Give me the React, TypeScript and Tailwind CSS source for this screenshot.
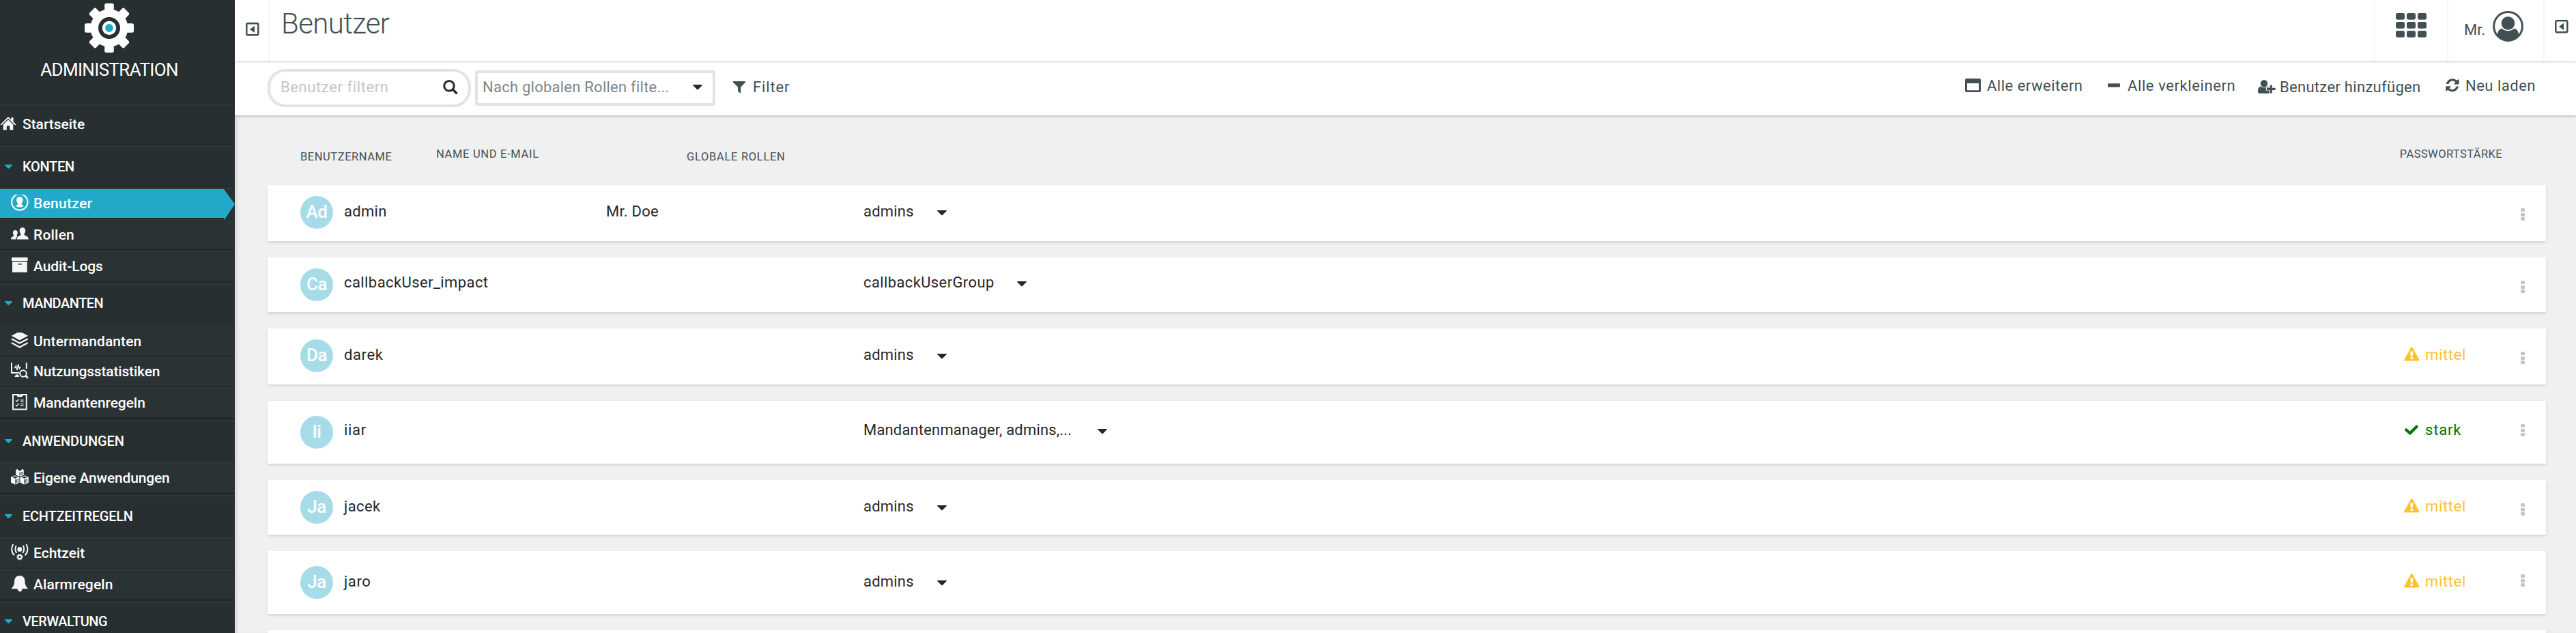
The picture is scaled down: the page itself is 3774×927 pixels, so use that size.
import type { ReactNode } from "react";

/* ---------- Icons ---------- */

function GearLogo() {
  return (
    <svg width="72" height="72" viewBox="-36 -36 72 72">
      <g fill="#fff">
        <circle r="27.5" />
        {[0, 45, 90, 135].map((a) => (
          <rect key={a} x="-6.8" y="-36" width="13.6" height="72" rx="2.5" transform={`rotate(${a})`} />
        ))}
      </g>
      <circle r="16" fill="#272f31" />
      <circle r="10.2" fill="#fff" />
      <circle r="5.9" fill="#22a9c9" />
    </svg>
  );
}

function HomeIcon() {
  return (
    <svg width="24" height="20" viewBox="0 0 24 20" fill="#f5f6f6">
      <path d="M12 0 16.3 4.2V1h3.2v6.3L23.5 11.3 22.2 12.5 12 2.6 1.8 12.5.5 11.3z" />
      <path d="M12 4.2 19.3 11.2V19.2H14.3V13.2H9.8V19.2H4.7V11.2z" />
    </svg>
  );
}

function UserCircleSmall() {
  return (
    <svg width="26" height="24" viewBox="0 0 26 24" overflow="hidden">
      <circle cx="12.8" cy="11" r="11.7" fill="none" stroke="#fff" strokeWidth="2.1" />
      <path fill="#fff" d="M12.800 3.200c3 0 4.700 1.900 4.700 4.700 0 2-.9 3.700-1.900 4.700v2l3.100 1.400c-1.300 1.700-3.400 2.600-5.900 2.600s-4.600-.9-5.900-2.600l3.100-1.400v-2C9 11.600 8.100 9.900 8.100 7.900c0-2.800 1.700-4.700 4.700-4.700z" />
    </svg>
  );
}

function UsersIcon() {
  return (
    <svg width="26" height="24" viewBox="0 -2 26 24" fill="#f5f6f6">
      <path d="M16.900 .2c2.800 0 4.300 2 4.300 4.600 0 2-.7 3.400-1.600 4.400v2.200c2.600 1 6 1.800 6.400 6.100H8.600c.3-4.200 3.400-5.100 5.700-6.100V9.200c-.9-1-1.600-2.400-1.600-4.400 0-2.600 1.400-4.600 4.200-4.600z" />
      <path d="M6.300 4c2.200 0 3.500 1.600 3.500 3.700 0 1.500-.5 2.600-1.200 3.400v1.600l1 .5C8.200 14.200 7.300 15.500 7.100 17.500H0c.3-3.300 2.300-4 4.100-4.800v-1.600C3.400 10.300 2.900 9.200 2.900 7.700 2.900 5.600 4.100 4 6.300 4z" />
    </svg>
  );
}

function ArchiveIcon() {
  return (
    <svg width="26" height="24" viewBox="0 0 26 24" fill="#f5f6f6">
      <rect x="1" y="0" width="23.600" height="5" rx=".6" />
      <path fillRule="evenodd" d="M2 6.200H23.800V21.200a.6.600 0 0 1-.6.600H2.600a.6.600 0 0 1-.6-.6zM10 9v1.600h5.800V9z" />
    </svg>
  );
}

function LayersIcon() {
  return (
    <svg width="26" height="24" viewBox="0 0 26 24">
      <path fill="#f5f6f6" d="M9.500 0H16l9.200 4.800L12.800 11.300.6 4.800z" />
      <path fill="none" stroke="#f5f6f6" strokeWidth="2.200" d="M1 9.200 12.800 15.500 24.700 9.200M1 15 12.800 21.400 24.700 15" />
    </svg>
  );
}

function StatsIcon() {
  return (
    <svg width="26" height="24" viewBox="0 0 26 24" fill="none" stroke="#f5f6f6">
      <path strokeWidth="2" d="M1 0V15H12M22.800 0V9" />
      <path strokeWidth="1.300" d="M4.500 7.600H6.200L7.500 4.500 9 11 10.800 2.500 12.300 9 13 7H14.500" />
      <circle cx="18" cy="16" r="4.800" strokeWidth="2" />
      <path strokeWidth="2.600" d="M21.500 19.300 25 22.700" />
      <path fill="#f5f6f6" stroke="none" d="M7.500 17.500h3.200l1.800 3.500H5.500v-.8z" />
    </svg>
  );
}

function ChecklistIcon() {
  return (
    <svg width="26" height="24" viewBox="0 0 26 24" fill="none" stroke="#f5f6f6">
      <path strokeWidth="2" d="M10.500 1H3V22.500H22.800V1H15.500" />
      <path fill="#f5f6f6" stroke="none" d="M8.500 0h3.200a1.500 1.500 0 0 0 2.600 0h3.200v2.500l-1.500 1.700h-6L8.500 2.500z" />
      <path strokeWidth="1.300" d="M7 9.500l1.500 1.500 3-3.500M7 16l1.500 1.500 3-3.500" />
      <path strokeWidth="1.200" d="M14 8.800h4.500M14 11.200h4.500M14 14.700h4.500M14 17.200h4.500" />
    </svg>
  );
}

function CubesIcon() {
  return (
    <svg width="26" height="24" viewBox="0 0 26 24" fill="#f5f6f6">
      <path d="M7.200 1.200 9 0h1.500l2.500 1.500L15.500 0H17l1.800 1.200V8.500L13 11 7.200 8.500z" />
      <path d="M0 11.800 5.800 9.200 12.400 12v7.500L6.500 22.800 0 19.800z" />
      <path d="M25.800 11.800 20 9.200 13.400 12v7.500l5.900 3.300 6.500-3z" />
      <g fill="none" stroke="#2a3234" strokeWidth=".9">
        <path d="M13 4.500V11M14.800 5l2.200-1V7l-2.200 1z" />
        <path fill="#2a3234" d="M9.800 0H16.200L13 2.600zM3 11.800 6 10.800 9.200 12 6.300 13.200z" />
        <path d="M6.700 15V22.500M8.500 15.700l2.200-1V18.500l-2.200 1z" />
        <path fill="#2a3234" d="M16.500 11.800 19.500 10.800 22.700 12 19.700 13.200z" />
        <path d="M19.500 15V22.500M21.300 15.700l2.200-1V18.500l-2.200 1z" />
      </g>
    </svg>
  );
}

function BroadcastIcon() {
  return (
    <svg width="26" height="24" viewBox="0 0 26 24" fill="none" stroke="#f5f6f6" strokeWidth="2">
      <circle cx="12.800" cy="7.500" r="3.400" fill="#f5f6f6" stroke="none" />
      <path d="M7.800 2C5.800 5 5.900 9.800 8.400 12.800M17.800 2C19.800 5 19.700 9.800 17.200 12.800" />
      <path d="M3.300 0C.2 5 .4 11.700 5 16.300M22.300 0C25.400 5 25.200 11.700 20.600 16.300" />
      <circle cx="12.800" cy="18.600" r="2.700" />
      <circle cx="12.800" cy="18.600" r="3.900" strokeWidth="1.300" strokeDasharray="1.700 1.360" />
    </svg>
  );
}

function BellIcon() {
  return (
    <svg width="26" height="24" viewBox="0 0 26 24" fill="#f5f6f6">
      <path d="M12.800 0c4.700 0 7.500 3.300 7.700 8.200.2 5.100 1.500 7.700 4.300 10.200v.9H.9v-.9c2.800-2.500 4-5.100 4.200-10.200C5.300 3.300 8.100 0 12.800 0z" />
      <path d="M9.300 19h7.200c0 2.600-1.400 4.500-3.500 4.500-1 0-1-1.300-2-1.600-1.100-.4-1.700-1.400-1.700-2.900z" />
    </svg>
  );
}

function PanelToggle() {
  return (
    <svg width="20" height="20" viewBox="0 0 20 20">
      <rect x="1.300" y="1.300" width="17" height="17" rx="1.800" fill="#fff" stroke="#425054" strokeWidth="2.500" />
      <path fill="#425054" d="M13 4.800V15L6 9.900z" />
    </svg>
  );
}

function AppGrid() {
  return (
    <svg width="45" height="36" viewBox="0 0 45 36" fill="#425054">
      {[0, 13, 26].map((y) =>
        [0, 16, 32].map((x) => <rect key={`${x}-${y}`} x={x} y={y} width="13" height="9.800" rx="2.800" />)
      )}
    </svg>
  );
}

function UserCircle() {
  return (
    <svg width="45" height="45" viewBox="0 0 45 45">
      <circle cx="22.500" cy="22.500" r="20.900" fill="#fff" stroke="#425054" strokeWidth="3" />
      <circle cx="22.500" cy="18" r="9.800" fill="#425054" />
      <path fill="#425054" d="M7 35C7.500 29.500 9.500 26.500 13.500 25.800 18.500 30.300 26.500 30.300 31.500 25.800 35.500 26.500 37.500 29.500 38 35 30.500 46 14.500 46 7 35z" />
    </svg>
  );
}

function SearchIcon() {
  return (
    <svg width="22" height="22" viewBox="0 0 22 22" fill="none" stroke="#2b2b2b">
      <circle cx="9" cy="8.800" r="7.300" strokeWidth="3" />
      <path d="M14.300 14 19.500 19.200" strokeWidth="3.600" strokeLinecap="round" />
    </svg>
  );
}

function FunnelIcon() {
  return (
    <svg width="18" height="18" viewBox="0 0 18 18" fill="#425054">
      <path d="M0 0H18V1.500L11.300 8.500V18L7 14.500V8.500L0 1.500z" />
    </svg>
  );
}

function WindowIcon() {
  return (
    <svg width="23" height="20" viewBox="0 0 23 20">
      <path fill="#425054" fillRule="evenodd" d="M2 0H21a2 2 0 0 1 2 2V18a2 2 0 0 1-2 2H2a2 2 0 0 1-2-2V2A2 2 0 0 1 2 0zM3 7V17.200H20V7z" />
    </svg>
  );
}

function MinusIcon() {
  return (
    <svg width="18" height="6" viewBox="0 0 18 6" fill="#425054">
      <rect y=".3" width="18" height="5.200" rx="1" />
    </svg>
  );
}

function UserPlusIcon() {
  return (
    <svg width="26" height="20" viewBox="0 0 26 20" fill="#425054">
      <circle cx="9" cy="5.200" r="5.200" />
      <path d="M4 9.500C6.500 11.800 11.500 11.800 14 9.500 15.500 9.800 16 10.300 16.500 11H11.800V15.500H16.500V19.800H2.500C.9 19.800 0 18.800 0 17.300 0 13.500.8 10 4 9.500z" />
      <path d="M17.600 7.500h3.200V11.800H25.600V14.900H20.800V19.600H17.600V14.900H13V11.800H17.600z" />
    </svg>
  );
}

function RefreshIcon() {
  return (
    <svg width="20" height="20" viewBox="0 0 20 20" fill="#425054">
      <path d="M.8 8C2 3.300 5.600.3 10 .3c2.400 0 4.700.9 6.500 2.500L19.600.8V8.500H12L14.300 5.300C13.200 4.200 11.700 3.400 10 3.400 7.400 3.400 5.300 5.200 4.400 8z" />
      <path d="M19 11.500C17.800 16.300 14.200 19.300 9.800 19.300c-2.400 0-4.700-.9-6.500-2.500L.2 19V11.200H8L5.500 14.300C6.600 15.400 8.100 16.200 9.800 16.200c2.600 0 4.700-1.800 5.600-4.700z" />
    </svg>
  );
}

function WarningIcon() {
  return (
    <svg width="23" height="21" viewBox="0 0 23 21">
      <path fill="#fdc32f" d="M11.300.3c.6 0 1 .3 1.300.8L22.300 18.500c.6 1.100 0 2-1.200 2H1.500c-1.200 0-1.800-.9-1.200-2L10 1.100c.3-.5.700-.8 1.300-.8z" />
      <path fill="#fff" d="M9.300 6.500h4L12.900 13.300H9.700zM9.500 14.800h3.500v3.100H9.500z" />
    </svg>
  );
}

function CheckIcon() {
  return (
    <svg width="20" height="16" viewBox="0 0 20 16" fill="none">
      <path d="M2.300 7.500 7.800 12.500 17.500 2.800" stroke="#007500" strokeWidth="4.300" strokeLinejoin="round" strokeLinecap="round" />
    </svg>
  );
}

function Caret() {
  return (
    <svg width="14" height="8" viewBox="0 0 14 8" fill="#272727">
      <path d="M.6 0H13.400c.6 0 .7.500.4.900L7.800 6.900c-.5.500-1.100.5-1.600 0L.2.900C-.1.500 0 0 .6 0z" />
    </svg>
  );
}

/* ---------- Sidebar ---------- */

function Section({ label, pad, tracking }: { label: string; pad: string; tracking: string }) {
  return (
    <div className={`flex h-[62px] shrink-0 border-t-2 border-[#2e383b] bg-[#272f31] pl-[7px] ${pad}`}>
      <svg width="11" height="6" viewBox="0 0 11 6" className="mt-[10px] shrink-0">
        <path d="M0 0H11V1L6.200 5.700H4.800L0 1z" fill="#22a9c9" />
      </svg>
      <span className={`ml-[15px] text-[20px] leading-[26px] font-medium whitespace-nowrap ${tracking}`}>{label}</span>
    </div>
  );
}

function Item({ label, icon, size, tracking }: { label: string; icon: ReactNode; size: string; tracking: string }) {
  return (
    <div className={`flex shrink-0 border-t-2 border-t-[#2e383b] border-b-[#222a2a] bg-[#2a3234] pl-4 ${size}`}>
      <span className="h-6 w-[26px] shrink-0">{icon}</span>
      <span className={`ml-[7px] text-[21px] leading-[26px] font-medium whitespace-nowrap ${tracking}`}>{label}</span>
    </div>
  );
}

function Sidebar() {
  return (
    <aside className="flex h-full w-[344px] shrink-0 flex-col overflow-hidden bg-[#272f31] text-white">
      <div className="flex h-[153px] shrink-0 flex-col items-center pt-[5px] pr-6">
        <GearLogo />
        <div className="mt-[9px] text-[26px] leading-8 tracking-[-0.65px]">ADMINISTRATION</div>
      </div>
      <div className="flex h-[60px] shrink-0 border-t-2 border-b-2 border-t-[#2e383b] border-b-[#222a2a] pt-[14px]">
        <span className="mt-[2px] w-[33px] shrink-0">
          <HomeIcon />
        </span>
        <span className="text-[21px] leading-[26px] font-medium tracking-[-0.05px]">Startseite</span>
      </div>

      <Section label="KONTEN" pad="pt-4" tracking="tracking-[-0.3px]" />
      <div className="flex h-[46px] shrink-0 border-t-2 border-t-[#2e383b] border-b-2 border-b-[#222a2a] bg-[#2a3234]">
        <div className="flex h-[42px] w-[328px] bg-[#22a9c9] pt-2 pl-4">
          <span className="h-6 w-[26px] shrink-0">
            <UserCircleSmall />
          </span>
          <span className="ml-[7px] text-[21px] leading-[26px] font-medium tracking-[0.3px]">Benutzer</span>
        </div>
        <svg width="16" height="44" viewBox="0 0 16 44" className="-mb-[2px] shrink-0">
          <path d="M0 0 16 22 1.300 44H0z" fill="#22a9c9" />
        </svg>
      </div>
      <Item label="Rollen" icon={<UsersIcon />} size="h-[46px] border-b-2 pt-2" tracking="tracking-[0.2px]" />
      <Item label="Audit-Logs" icon={<ArchiveIcon />} size="h-12 border-b-4 pt-2" tracking="tracking-[-0.1px]" />

      <Section label="MANDANTEN" pad="pt-[14px]" tracking="tracking-[-0.5px]" />
      <Item label="Untermandanten" icon={<LayersIcon />} size="h-[46px] border-b-2 pt-2" tracking="tracking-[0.08px]" />
      <Item label="Nutzungsstatistiken" icon={<StatsIcon />} size="h-11 border-b-2 pt-[6px]" tracking="tracking-[-0.17px]" />
      <Item label="Mandantenregeln" icon={<ChecklistIcon />} size="h-12 border-b-4 pt-2" tracking="tracking-[-0.07px]" />

      <Section label="ANWENDUNGEN" pad="pt-4" tracking="tracking-[-0.1px]" />
      <Item label="Eigene Anwendungen" icon={<CubesIcon />} size="h-12 border-b-4 pt-2" tracking="tracking-[-0.16px]" />

      <Section label="ECHTZEITREGELN" pad="pt-4" tracking="tracking-[-0.25px]" />
      <Item label="Echtzeit" icon={<BroadcastIcon />} size="h-[46px] border-b-2 pt-2" tracking="tracking-[0px]" />
      <Item label="Alarmregeln" icon={<BellIcon />} size="h-12 border-b-4 pt-2" tracking="tracking-[0.15px]" />

      <Section label="VERWALTUNG" pad="pt-[14px]" tracking="tracking-[-0.45px]" />
    </aside>
  );
}

/* ---------- Header and toolbar ---------- */

function Header() {
  return (
    <header className="relative z-20 flex h-[89px] shrink-0 bg-white shadow-[0_1px_4px_rgba(0,0,0,0.22)]">
      <div className="w-[51px] shrink-0 border-r-2 border-[#f5f6f6] pt-[33px] pl-4">
        <PanelToggle />
      </div>
      <h1 className="mt-[10px] ml-[17px] text-[42px] leading-[50px] font-light tracking-[-0.6px]">Benutzer</h1>
      <div className="ml-auto w-[107px] shrink-0 border-l-2 border-[#f5f6f6] pt-[19px] pl-[30px]">
        <AppGrid />
      </div>
      <div className="flex w-[141px] shrink-0 border-l-2 border-[#f5f6f6] pl-[23px]">
        <span className="mt-[31px] w-[42px] text-[22px] leading-[25px]">Mr.</span>
        <span className="mt-4">
          <UserCircle />
        </span>
      </div>
      <div className="w-[48px] shrink-0 border-l-2 border-[#f5f6f6] pt-[29px] pl-[15px]">
        <PanelToggle />
      </div>
    </header>
  );
}

function Toolbar() {
  return (
    <div className="relative z-10 flex h-20 shrink-0 items-start bg-white pr-[60px] pl-12 text-[22px] leading-[25px] whitespace-nowrap shadow-[0_1px_4px_rgba(0,0,0,0.28)]">
      <div className="mt-3 flex h-14 w-[298px] shrink-0 rounded-[26px] border-4 border-[#e1e3e4] pt-[10px] pl-[15px]">
        <span className="w-[238px] tracking-[0.6px] text-[#c3c7c8]">Benutzer filtern</span>
        <span className="mt-[2px]">
          <SearchIcon />
        </span>
      </div>
      <div className="mt-[14px] ml-[6px] flex h-[52px] w-[352px] shrink-0 rounded-[3px] border-4 border-[#e1e3e4] pt-2">
        <span className="ml-[7px] w-[308px] tracking-[0.24px] text-[#7d8587]">Nach globalen Rollen filte...</span>
        <span className="mt-[9px]">
          <Caret />
        </span>
      </div>
      <span className="mt-[30px] ml-[26px]">
        <FunnelIcon />
      </span>
      <span className="mt-[26px] ml-[11px] tracking-[0.85px]">Filter</span>

      <div className="ml-auto flex items-start">
        <span className="mt-[26px] w-8">
          <WindowIcon />
        </span>
        <span className="mt-6 w-[177px] tracking-[0.5px]">Alle erweitern</span>
        <span className="mt-[33px] w-[29px]">
          <MinusIcon />
        </span>
        <span className="mt-6 w-[191px] tracking-[0.6px]">Alle verkleinern</span>
        <span className="mt-7 w-8">
          <UserPlusIcon />
        </span>
        <span className="mt-[26px] w-[243px] tracking-[0.3px]">Benutzer hinzufügen</span>
        <span className="mt-[26px] w-[29px]">
          <RefreshIcon />
        </span>
        <span className="mt-6 w-[102px] tracking-[0.5px]">Neu laden</span>
      </div>
    </div>
  );
}

/* ---------- User list ---------- */

type Strength = "mittel" | "stark";

interface User {
  initials: string;
  name: string;
  nameTracking: string;
  fullName?: string;
  roles: string;
  rolesStyle: string;
  strength?: Strength;
  card: string;
  avatar: string;
  text: string;
}

const users: User[] = [
  { initials: "Ad", name: "admin", nameTracking: "tracking-[0.3px]", fullName: "Mr. Doe", roles: "admins", rolesStyle: "w-[108px] tracking-[0.2px]", card: "h-[82px]", avatar: "mt-4", text: "mt-[26px]" },
  { initials: "Ca", name: "callbackUser_impact", nameTracking: "tracking-[0.42px]", roles: "callbackUserGroup", rolesStyle: "w-[225px] tracking-[0.38px]", card: "h-20", avatar: "mt-4", text: "mt-6" },
  { initials: "Da", name: "darek", nameTracking: "tracking-[0.6px]", roles: "admins", rolesStyle: "w-[108px] tracking-[0.2px]", strength: "mittel", card: "h-[82px]", avatar: "mt-4", text: "mt-[26px]" },
  { initials: "Ii", name: "iiar", nameTracking: "tracking-[0.7px]", roles: "Mandantenmanager, admins,...", rolesStyle: "w-[343px] tracking-[0.17px]", strength: "stark", card: "h-[92px]", avatar: "mt-[22px]", text: "mt-[30px]" },
  { initials: "Ja", name: "jacek", nameTracking: "tracking-[0.4px]", roles: "admins", rolesStyle: "w-[108px] tracking-[0.2px]", strength: "mittel", card: "h-20", avatar: "mt-4", text: "mt-[26px]" },
  { initials: "Ja", name: "jaro", nameTracking: "tracking-[0.6px]", roles: "admins", rolesStyle: "w-[108px] tracking-[0.2px]", strength: "mittel", card: "h-[92px]", avatar: "mt-[22px]", text: "mt-8" },
];

const cardStyle = "shrink-0 bg-white shadow-[0_2px_4px_rgba(0,0,0,0.13)]";

function UserCard({ user }: { user: User }) {
  return (
    <div className={`flex items-start pr-[31px] pl-12 text-[22px] leading-[25px] whitespace-nowrap text-[#272727] ${cardStyle} ${user.card}`}>
      <div className={`h-12 w-12 shrink-0 rounded-full bg-[#a6dce8] text-center text-[26px] leading-[46px] font-medium tracking-[-0.5px] text-white ${user.avatar}`}>
        {user.initials}
      </div>
      <div className={`ml-4 w-[384px] shrink-0 ${user.text} ${user.nameTracking}`}>{user.name}</div>
      <div className={`w-[377px] shrink-0 tracking-[0.25px] ${user.text}`}>{user.fullName}</div>
      <div className={`flex flex-1 ${user.text}`}>
        <span className={user.rolesStyle}>{user.roles}</span>
        <span className="mt-[11px]">
          <Caret />
        </span>
      </div>
      {user.strength && (
        <div className={`flex w-[171px] shrink-0 ${user.text}`}>
          <span className={user.strength === "stark" ? "mt-[5px] w-[31px] pl-px" : "mt-px w-[31px]"}>
            {user.strength === "stark" ? <CheckIcon /> : <WarningIcon />}
          </span>
          <span className={user.strength === "stark" ? "tracking-[0.8px] text-[#007500]" : "tracking-[0.65px] text-[#fdc32f]"}>
            {user.strength}
          </span>
        </div>
      )}
      <div className="mt-[34px] flex w-[6px] shrink-0 flex-col gap-[1.5px]">
        <i className="h-[5px] rounded-[1.5px] bg-[#c4c4c4]" />
        <i className="h-[5px] rounded-[1.5px] bg-[#c4c4c4]" />
        <i className="h-[5px] rounded-[1.5px] bg-[#c4c4c4]" />
      </div>
    </div>
  );
}

function UserList() {
  return (
    <main className="flex flex-1 flex-col overflow-hidden bg-[#f0f0f0] pr-11 pl-12 shadow-[inset_6px_0_6px_-4px_rgba(0,0,0,0.15)]">
      <div className="flex h-[102px] shrink-0 text-[16.5px] leading-5 whitespace-nowrap">
        <span className="mt-[51px] ml-12 w-[199px] tracking-[0.55px]">BENUTZERNAME</span>
        <span className="mt-[47px] w-[367px] tracking-[0.68px]">NAME UND E-MAIL</span>
        <span className="mt-[51px] tracking-[0.7px]">GLOBALE ROLLEN</span>
        <span className="mt-[47px] mr-[64px] ml-auto tracking-[0.4px]">PASSWORTSTÄRKE</span>
      </div>
      <div className="flex flex-col gap-6">
        {users.map((user) => (
          <UserCard key={user.name} user={user} />
        ))}
        <div className={`h-20 ${cardStyle}`} />
      </div>
    </main>
  );
}

export default function App() {
  return (
    <div className="flex h-[927px] w-[3774px] overflow-hidden bg-[#f0f0f0] font-['Roboto',sans-serif] text-[#425054]">
      <Sidebar />
      <div className="flex min-w-0 flex-1 flex-col">
        <Header />
        <Toolbar />
        <UserList />
      </div>
    </div>
  );
}
